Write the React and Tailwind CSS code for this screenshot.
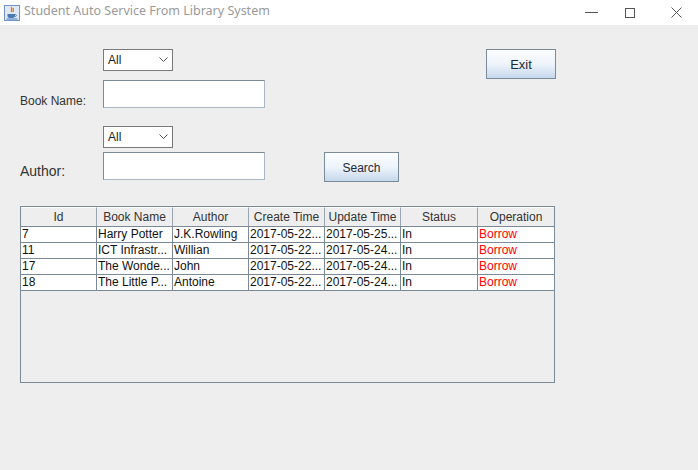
const rows = [
  ["7", "Harry Potter", "J.K.Rowling", "2017-05-22...", "2017-05-25...", "In"],
  ["11", "ICT Infrastr...", "Willian", "2017-05-22...", "2017-05-24...", "In"],
  ["17", "The Wonde...", "John", "2017-05-22...", "2017-05-24...", "In"],
  ["18", "The Little P...", "Antoine", "2017-05-22...", "2017-05-24...", "In"],
];

const headers = ["Id", "Book Name", "Author", "Create Time", "Update Time", "Status", "Operation"];

const Combo = () => (
  <div className="flex h-[22px] w-[70px] items-center justify-between border border-[#7a7a7a] bg-white pl-[4px] pr-[4px] text-[12px] text-[#222]">
    <span>All</span>
    <svg width="9" height="6" viewBox="0 0 9 6">
      <path d="M0.5 0.5 L4.5 4.5 L8.5 0.5" fill="none" stroke="#555" strokeWidth="1" />
    </svg>
  </div>
);

const TextField = () => (
  <div className="h-[28px] w-[162px] border border-[#7a8a99] border-b-[#a9b8c6] border-r-[#a9b8c6] bg-white" />
);

const Button = ({ label, width, size }) => (
  <button
    className={`flex h-[30px] ${width} items-center justify-center border border-[#7a8a99] bg-gradient-to-b from-[#fbfdff] via-[#eef4fb] to-[#c6d8ec] pt-[1px] ${size} text-[#1e2a3a]`}
    type="button"
  >
    {label}
  </button>
);

const JavaIcon = () => (
  <svg width="16" height="16" viewBox="0 0 16 16">
    <rect x="0.5" y="0.5" width="15" height="15" fill="#dfe9f5" stroke="#6f93c2" />
    <path d="M7 2 C9 4 6 5 8 7 M9 3 C10 4.5 8.5 5.5 9.5 7" fill="none" stroke="#e07a1f" strokeWidth="1.3" />
    <path d="M3.5 9 H11 V11 C11 12.5 9.5 13 7 13 C4.5 13 3.5 12.5 3.5 11 Z" fill="#4a78b5" />
    <path d="M11 9.5 C13 9.5 13 11.5 11 11.5" fill="none" stroke="#4a78b5" strokeWidth="1" />
    <rect x="2.5" y="13.5" width="11" height="1" fill="#4a78b5" />
  </svg>
);

const App = () => {
  return (
    <main className="h-[470px] w-[698px] overflow-hidden bg-[#eeeeee] font-['Liberation_Sans',Arial,sans-serif]">
      <header className="flex h-[25px] items-center bg-white">
        <div className="ml-[4px]">
          <JavaIcon />
        </div>
        <span className="ml-[4px] -mt-[2px] font-['Noto_Sans',sans-serif] text-[12.5px] text-[#9a9a9a]">
          Student Auto Service From Library System
        </span>
        <div className="ml-auto flex items-center">
          <div className="mr-[27px] h-px w-[13px] bg-[#555]" />
          <div className="mr-[36px] h-[10px] w-[10px] border border-[#555]" />
          <svg className="mr-[16px]" width="11" height="11" viewBox="0 0 11 11">
            <path d="M0.5 0.5 L10.5 10.5 M10.5 0.5 L0.5 10.5" stroke="#555" strokeWidth="1" />
          </svg>
        </div>
      </header>

      <section className="pl-[20px]">
        <div className="mt-[24px] flex items-start">
          <div className="w-[83px]" />
          <Combo />
          <div className="ml-[313px]">
            <Button label="Exit" width="w-[70px]" size="text-[13px]" />
          </div>
        </div>

        <div className="mt-[1px] flex items-start">
          <label className="mt-[14px] w-[83px] text-[12px] leading-[14px] text-[#333]">Book Name:</label>
          <TextField />
        </div>

        <div className="mt-[18px] flex">
          <div className="w-[83px]" />
          <Combo />
        </div>

        <div className="mt-[4px] flex items-start">
          <label className="mt-[9px] w-[83px] text-[14px] text-[#333]">Author:</label>
          <TextField />
          <div className="ml-[59px]">
            <Button label="Search" width="w-[75px]" size="text-[12px]" />
          </div>
        </div>

        <div className="mt-[24px] h-[177px] w-[535px] border border-[#7a8a99] bg-[#eeeeee]">
          <div className="grid h-[20px] grid-cols-[76px_76px_76px_76px_76px_77px_76px] border-b border-[#7a8a99] bg-[#eeeeee]">
            {headers.map((h, i) => (
              <div
                className={`flex items-center justify-center border-t border-white text-[12px] text-[#333] ${i < 6 ? "border-r border-r-[#9aa6b2]" : ""}`}
                key={h}
              >
                {h}
              </div>
            ))}
          </div>
          {rows.map((row) => (
            <div
              className="grid h-[16px] grid-cols-[76px_76px_76px_76px_76px_77px_76px] border-b border-[#7a8a99] bg-white text-[12px] leading-[15px]"
              key={row[0]}
            >
              {row.map((cell, i) => (
                <div className="overflow-hidden whitespace-nowrap border-r border-[#7a8a99] pl-[1px] text-[#111]" key={i}>
                  {cell}
                </div>
              ))}
              <div className="pl-[1px] text-[#ff0000]">Borrow</div>
            </div>
          ))}
        </div>
      </section>
    </main>
  );
};

export default App;
